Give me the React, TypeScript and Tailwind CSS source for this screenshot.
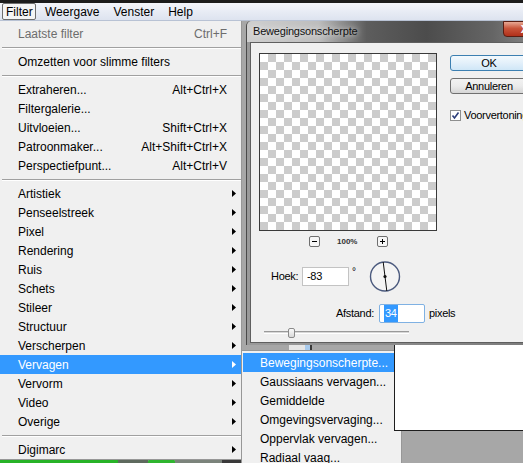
import type { ReactNode } from 'react';

type MenuRow =
  | { kind: 'sep' }
  | { kind: 'item'; label: string; shortcut?: string; sub?: boolean; disabled?: boolean; active?: boolean };

const filterMenu: MenuRow[] = [
  { kind: 'item', label: 'Laatste filter', shortcut: 'Ctrl+F', disabled: true },
  { kind: 'sep' },
  { kind: 'item', label: 'Omzetten voor slimme filters' },
  { kind: 'sep' },
  { kind: 'item', label: 'Extraheren...', shortcut: 'Alt+Ctrl+X' },
  { kind: 'item', label: 'Filtergalerie...' },
  { kind: 'item', label: 'Uitvloeien...', shortcut: 'Shift+Ctrl+X' },
  { kind: 'item', label: 'Patroonmaker...', shortcut: 'Alt+Shift+Ctrl+X' },
  { kind: 'item', label: 'Perspectiefpunt...', shortcut: 'Alt+Ctrl+V' },
  { kind: 'sep' },
  { kind: 'item', label: 'Artistiek', sub: true },
  { kind: 'item', label: 'Penseelstreek', sub: true },
  { kind: 'item', label: 'Pixel', sub: true },
  { kind: 'item', label: 'Rendering', sub: true },
  { kind: 'item', label: 'Ruis', sub: true },
  { kind: 'item', label: 'Schets', sub: true },
  { kind: 'item', label: 'Stileer', sub: true },
  { kind: 'item', label: 'Structuur', sub: true },
  { kind: 'item', label: 'Verscherpen', sub: true },
  { kind: 'item', label: 'Vervagen', sub: true, active: true },
  { kind: 'item', label: 'Vervorm', sub: true },
  { kind: 'item', label: 'Video', sub: true },
  { kind: 'item', label: 'Overige', sub: true },
  { kind: 'sep' },
  { kind: 'item', label: 'Digimarc', sub: true },
];

const blurMenu = [
  'Bewegingsonscherpte...',
  'Gaussiaans vervagen...',
  'Gemiddelde',
  'Omgevingsvervaging...',
  'Oppervlak vervagen...',
  'Radiaal vaag...',
  'Slim vervagen...',
];

function Arrow({ white }: { white?: boolean }) {
  return (
    <svg width="4" height="7" viewBox="0 0 4 7">
      <polygon points="0,0 4,3.5 0,7" fill={white ? '#ffffff' : '#000000'} />
    </svg>
  );
}

function ZoomButton({ children }: { children: ReactNode }) {
  return (
    <div className="relative flex h-[11px] w-[11px] items-center justify-center rounded-[2px] border border-[#6f6f6f] bg-[#f6f6f6]">
      {children}
    </div>
  );
}

export default function App() {
  return (
    <div className="relative flex h-[463px] w-[523px] flex-col overflow-hidden bg-[#a7a7a7] font-['Liberation_Sans',Arial,sans-serif] text-black">
      <div className="h-[3px] bg-[#1c1c1c]" />
      <div className="flex h-[18px] items-stretch border-b border-[#b8c2d4] bg-[linear-gradient(#f3f5fa,#dde3ef)] text-[12px]">
        <div className="ml-[2px] flex w-[34px] items-center rounded-[2px] border border-[#6e6e6e] bg-[#f5f5f5] pl-[3px]">Filter</div>
        <div className="ml-[2px] flex items-center px-[7px]">Weergave</div>
        <div className="flex items-center px-[7px]">Venster</div>
        <div className="flex items-center px-[7px]">Help</div>
      </div>

      {/* dialog window */}
      <div className="absolute left-[246px] top-[21px] h-[324px] w-[300px] rounded-t-[5px] border-l border-[#4a4a4a] bg-[linear-gradient(90deg,#9a9a9a,#7a7a7a)]">
        <div className="flex h-[21px] items-start rounded-t-[5px] bg-[linear-gradient(90deg,#cfcfcf_0%,#bdbdbd_24%,#5d5d5d_40%,#4c4c4c_60%,#656565_82%,#8e8e8e_100%)]">
          <span className="mt-[5px] pl-[6px] text-[11px] leading-none tracking-[-0.2px] text-[#111] [text-shadow:0_0_6px_#ffffff]">Bewegingsonscherpte</span>
          <div className="flex-1" />
          <div className="flex h-[16px] w-[43px] items-center justify-center rounded-b-[4px] border border-[#5a1d12] bg-[linear-gradient(#e8a995,#c9553b_45%,#b0301a)] text-[11px] font-bold leading-none text-white">
            X
          </div>
        </div>
        <div className="ml-[3px] flex h-[301px] border border-[#5f5f5f] bg-[#f0f0f0] text-[11px] tracking-[-0.3px]">
          <div className="flex w-[186px] shrink-0 flex-col pl-[8px] pt-[10px]">
            <div className="h-[178px] w-[178px] border border-[#3a3a3a] bg-[conic-gradient(#cccccc_25%,#ffffff_0_50%,#cccccc_0_75%,#ffffff_0)] bg-[length:16px_16px]" />
            <div className="mt-[5px] flex h-[11px] items-center">
              <div className="ml-[50px] shrink-0">
                <ZoomButton>
                  <span className="h-px w-[5px] bg-black" />
                </ZoomButton>
              </div>
              <span className="ml-[17px] shrink-0 text-[8px] font-bold leading-none tracking-normal text-[#333]">100%</span>
              <div className="ml-[20px] shrink-0">
                <ZoomButton>
                  <span className="h-px w-[5px] bg-black" />
                  <span className="absolute h-[5px] w-px bg-black" />
                </ZoomButton>
              </div>
            </div>
            <div className="mt-[14px] flex h-[31px] items-center">
              <span className="ml-[12px] w-[31px] shrink-0">Hoek:</span>
              <div className="flex h-[19px] w-[47px] shrink-0 items-center border border-[#c3c3c3] bg-white pl-[4px]">-83</div>
              <span className="ml-[3px] shrink-0 self-start pt-[3px] text-[10px]">°</span>
              <svg className="ml-[13px] shrink-0" width="32" height="31" viewBox="0 0 32 31">
                <circle cx="16" cy="15.5" r="14.5" fill="#f4f4f4" stroke="#4b5a7e" strokeWidth="1.4" />
                <line x1="14.2" y1="1" x2="17.8" y2="30" stroke="#111" strokeWidth="1" />
                <circle cx="16" cy="15.5" r="1.6" fill="#111" />
              </svg>
            </div>
            <div className="mt-[12px] flex h-[19px] items-center">
              <span className="ml-[77px] shrink-0">Afstand:</span>
              <div className="ml-[5px] flex h-[19px] w-[46px] shrink-0 items-center rounded-[2px] border border-[#7fb1e3] bg-white pl-[4px]">
                <span className="bg-[#3399ff] px-[1px] text-white">34</span>
              </div>
              <span className="ml-[4px] shrink-0">pixels</span>
            </div>
            <div className="relative mt-[5px] h-[10px]">
              <div className="absolute left-[5px] top-[3px] h-[3px] w-[145px] border-t border-[#9a9a9a] border-b border-b-white bg-[#d8d8d8]" />
              <div className="absolute left-[29px] top-0 h-[10px] w-[7px] rounded-[2px] border border-[#8a8a8a] bg-[linear-gradient(#fafafa,#d9d9d9)]" />
            </div>
          </div>
          <div className="flex flex-col pl-[13px] pt-[12px]">
            <div className="flex h-[16px] w-[78px] shrink-0 items-center justify-center rounded-[3px] border border-[#3c7fb1] bg-[linear-gradient(#f3f9fd,#e3f0fa_50%,#cfe6f7)]">OK</div>
            <div className="mt-[7px] flex h-[16px] w-[78px] shrink-0 items-center justify-center rounded-[3px] border border-[#707070] bg-[linear-gradient(#f2f2f2,#ebebeb_50%,#d6d6d6)]">
              Annuleren
            </div>
            <div className="mt-[13px] flex items-center whitespace-nowrap">
              <div className="flex h-[11px] w-[11px] items-center justify-center border border-[#8e8f8f] bg-white">
                <svg width="9" height="9" viewBox="0 0 9 9">
                  <path d="M1.5 4.5 L3.5 7 L7.5 1.5" fill="none" stroke="#2c3e7a" strokeWidth="1.6" />
                </svg>
              </div>
              <span className="ml-[3px]">Voorvertoning</span>
            </div>
          </div>
        </div>
      </div>

      {/* bits of the workspace below the dialog */}
      <div className="absolute left-[289px] top-[345px] flex h-[7px]">
        <div className="w-[16px] bg-[#e6e6e6]" />
        <div className="w-[5px] bg-[#a9cbed]" />
        <div className="w-[2px] bg-[#3a3a3a]" />
      </div>

      {/* taskbar sliver */}
      <div className="absolute bottom-0 left-0 flex h-[4px] w-[242px]">
        <div className="w-[118px] bg-[#27b327]" />
        <div className="w-[30px] bg-[#5e6a5e]" />
        <div className="w-[27px] rounded-t-[3px] bg-[#2fb52f]" />
        <div className="w-[47px] bg-[#7b837b]" />
        <div className="w-[20px] bg-[#3a3a3a]" />
      </div>

      {/* filter menu */}
      <div className="absolute left-0 top-[21px] w-[242px] border-r border-b border-[#979797] bg-[#f0f0f0] pt-[3px] text-[12px]">
        {filterMenu.map((row, i) =>
          row.kind === 'sep' ? (
            <div key={i} className="flex h-[9px] items-center pl-[2px]">
              <div className="w-full border-t border-b border-t-[#a0a0a0] border-b-white" />
            </div>
          ) : (
            <div
              key={i}
              className={`flex h-[19px] items-center pl-[18px] ${row.active ? 'bg-[#3399ff] text-white' : ''} ${row.disabled ? 'text-[#6d6d6d]' : ''}`}
            >
              <span className="flex-1 whitespace-nowrap">{row.label}</span>
              {row.shortcut ? <span className="whitespace-nowrap">{row.shortcut}</span> : null}
              <span className="flex w-[14px] items-center pl-[5px]">{row.sub ? <Arrow white={row.active} /> : null}</span>
            </div>
          ),
        )}
      </div>

      {/* blur submenu */}
      <div className="absolute left-[241px] top-[350px] h-[130px] w-[161px] border border-[#979797] bg-[#f0f0f0] px-[1px] pt-[2px] text-[12px]">
        {blurMenu.map((label, i) => (
          <div key={label} className={`flex h-[19px] items-center pl-[17px] ${i === 0 ? 'bg-[#3399ff] text-white' : ''}`}>
            {label}
          </div>
        ))}
      </div>

      {/* document window */}
      <div className="absolute left-[394px] top-[345px] h-[86px] w-[140px] border-l border-b border-[#1e1e1e] bg-white" />
    </div>
  );
}
